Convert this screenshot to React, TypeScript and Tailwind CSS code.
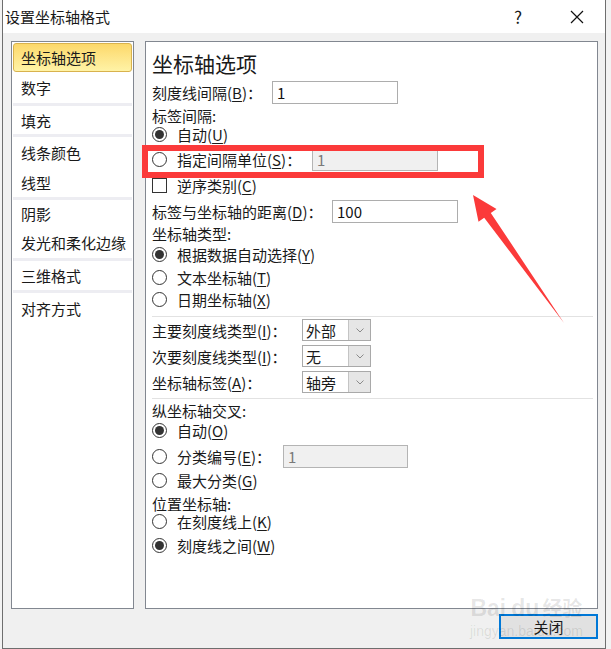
import React from 'react';

const Mn = ({ k }: { k: string }) => (
  <>
    (<span className="underline underline-offset-2">{k}</span>)
  </>
);

const Radio = ({ checked }: { checked?: boolean }) => (
  <span className="w-[15px] h-[15px] rounded-full border border-[#333] bg-white flex items-center justify-center shrink-0">
    {checked && <span className="w-[9px] h-[9px] rounded-full bg-[#333]" />}
  </span>
);

const Input = ({ value, disabled, w }: { value: string; disabled?: boolean; w: string }) => (
  <div
    className={`${w} h-[23px] border flex items-center pl-[4px] ${
      disabled ? 'bg-[#f0f0f0] border-[#b4b4b4] text-[#7a7a7a]' : 'bg-white border-[#adadad] text-[#111]'
    }`}
  >
    {value}
  </div>
);

const Select = ({ value }: { value: string }) => (
  <div className="w-[69px] h-[22px] border border-[#a9a9a9] bg-white flex">
    <div className="flex-1 flex items-center pl-[3px]">{value}</div>
    <div className="w-[22px] bg-[#e6e6e6] border-l border-[#c4c4c4] flex items-center justify-center">
      <svg width="8" height="5" viewBox="0 0 8 5">
        <path d="M0.5 0.5 L4 4 L7.5 0.5" stroke="#8a8a8a" fill="none" strokeWidth="1" />
      </svg>
    </div>
  </div>
);

const Item = ({ label, h }: { label: string; h: string }) => (
  <div className={`${h} flex items-center pl-[9px]`}>{label}</div>
);

const Sep = () => <div className="h-[3px] mx-[1px] bg-[#ededf2]" />;

export default function App() {
  return (
    <div className="relative w-[611px] h-[649px] flex bg-[#ececec] text-[15px] text-[#1a1a1a] font-['Noto_Sans_CJK_SC','Microsoft_YaHei',sans-serif] leading-none overflow-hidden">
      <div className="w-[2px] bg-[#f2f2f2]" />

      {/* Dialog */}
      <div className="w-[604px] h-[649px] border-l border-r border-b border-[#6e6e6e] flex flex-col">
        {/* Title bar */}
        <div className="h-[33px] bg-white flex items-center pl-[2px] shrink-0">
          <span className="flex-1">设置坐标轴格式</span>
          <span className="w-[20px] text-center text-[17px] mr-[42px]">?</span>
          <svg width="14" height="14" viewBox="0 0 14 14" className="mr-[21px]">
            <path d="M1 1 L13 13 M13 1 L1 13" stroke="#111" strokeWidth="1.2" />
          </svg>
        </div>

        {/* Body */}
        <div className="flex-1 bg-[#f0f0f0] flex flex-col pt-[8px]">
          <div className="flex pl-[8px]">
            {/* Category list */}
            <div className="w-[123px] h-[568px] bg-white border border-[#828790] flex flex-col pt-[1px]">
              <div className="h-[29px] mx-[1px] rounded-[3px] border border-[#d8b24e] bg-gradient-to-b from-[#fcd869] to-[#fff3a6] flex items-center pl-[7px]">
                坐标轴选项
              </div>
              <Item label="数字" h="h-[31px]" />
              <Sep />
              <Item label="填充" h="h-[28px]" />
              <Sep />
              <Item label="线条颜色" h="h-[30px]" />
              <Item label="线型" h="h-[30px]" />
              <Sep />
              <Item label="阴影" h="h-[27px]" />
              <Item label="发光和柔化边缘" h="h-[31px]" />
              <Sep />
              <Item label="三维格式" h="h-[29px]" />
              <Sep />
              <Item label="对齐方式" h="h-[30px]" />
            </div>

            {/* Options panel */}
            <div className="ml-[11px] w-[453px] h-[568px] bg-white border border-[#828790] pl-[6px] flex flex-col">
              <div className="mt-[7px] h-[28px] flex items-center text-[21px]">坐标轴选项</div>
              <div className="h-[30px] flex items-center">
                <span className="w-[120px]">
                  刻度线间隔<Mn k="B" />：
                </span>
                <Input value="1" w="w-[126px]" />
              </div>
              <div className="h-[16px] flex items-center">标签间隔:</div>
              <div className="h-[22px] flex items-center gap-[10px]">
                <Radio checked />
                <span>
                  自动<Mn k="U" />
                </span>
              </div>
              <div className="h-[28px] flex items-center">
                <Radio />
                <span className="ml-[10px] w-[135px]">
                  指定间隔单位<Mn k="S" />：
                </span>
                <Input value="1" disabled w="w-[126px]" />
              </div>
              <div className="h-[24px] flex items-center gap-[10px]">
                <span className="w-[15px] h-[15px] border border-[#333] bg-white shrink-0" />
                <span>
                  逆序类别<Mn k="C" />
                </span>
              </div>
              <div className="h-[28px] flex items-center">
                <span className="w-[180px]">
                  标签与坐标轴的距离<Mn k="D" />：
                </span>
                <Input value="100" w="w-[126px]" />
              </div>
              <div className="h-[16px] flex items-center">坐标轴类型:</div>
              <div className="h-[26px] flex items-center gap-[10px]">
                <Radio checked />
                <span>
                  根据数据自动选择<Mn k="Y" />
                </span>
              </div>
              <div className="h-[20px] flex items-center gap-[10px]">
                <Radio />
                <span>
                  文本坐标轴<Mn k="T" />
                </span>
              </div>
              <div className="h-[24px] flex items-center gap-[10px]">
                <Radio />
                <span>
                  日期坐标轴<Mn k="X" />
                </span>
              </div>
              <div className="h-[10px] flex items-center pr-[4px]">
                <div className="w-full h-[1px] bg-[#e2e2e2]" />
              </div>
              <div className="h-[18px] flex items-center">
                <span className="w-[150px]">
                  主要刻度线类型<Mn k="I" />：
                </span>
                <Select value="外部" />
              </div>
              <div className="h-[34px] flex items-center">
                <span className="w-[150px]">
                  次要刻度线类型<Mn k="I" />：
                </span>
                <Select value="无" />
              </div>
              <div className="h-[18px] flex items-center">
                <span className="w-[150px]">
                  坐标轴标签<Mn k="A" />：
                </span>
                <Select value="轴旁" />
              </div>
              <div className="h-[14px] flex items-center pr-[4px]">
                <div className="w-full h-[1px] bg-[#e2e2e2]" />
              </div>
              <div className="h-[10px] flex items-center">纵坐标轴交叉:</div>
              <div className="h-[30px] flex items-center gap-[10px]">
                <Radio checked />
                <span>
                  自动<Mn k="O" />
                </span>
              </div>
              <div className="h-[22px] flex items-center">
                <Radio />
                <span className="ml-[10px] w-[106px]">
                  分类编号<Mn k="E" />：
                </span>
                <Input value="1" disabled w="w-[125px]" />
              </div>
              <div className="h-[26px] flex items-center gap-[10px]">
                <Radio />
                <span>
                  最大分类<Mn k="G" />
                </span>
              </div>
              <div className="h-[20px] flex items-center">位置坐标轴:</div>
              <div className="h-[16px] flex items-center gap-[10px]">
                <Radio />
                <span>
                  在刻度线上<Mn k="K" />
                </span>
              </div>
              <div className="h-[32px] flex items-center gap-[10px]">
                <Radio checked />
                <span>
                  刻度线之间<Mn k="W" />
                </span>
              </div>
            </div>
          </div>

          {/* Button row */}
          <div className="mt-[5px] flex justify-end pr-[7px]">
            <button className="w-[99px] h-[25px] border-2 border-[#0078d7] bg-[#e1e1e1] flex items-center justify-center">
              关闭
            </button>
          </div>
        </div>
      </div>

      <div className="w-[5px] bg-[#f2f2f2]" />

      {/* Annotation: red highlight box */}
      <div className="absolute left-[142px] top-[145px] w-[342px] h-[33px] border-[6px] border-[#fb3a3a]" />

      {/* Annotation: red arrow */}
      <svg className="absolute left-0 top-0" width="611" height="649" viewBox="0 0 611 649">
        <polygon
          points="473,195 496.5,209 490.8,213 564,323 484.2,217.7 478.5,221.8"
          fill="#fb3a3a"
        />
      </svg>

      {/* Watermark */}
      <div className="absolute left-[470px] top-[597px] flex flex-col items-center whitespace-nowrap text-[#000]/10 font-['Liberation_Sans',sans-serif]">
        <span className="text-[23px] font-bold leading-none">
          Bai<span className="ml-[5px]">du</span>
          <span className="ml-[3px] font-['Noto_Sans_CJK_SC',sans-serif] text-[20px]">经验</span>
        </span>
        <span className="text-[14px] leading-none mt-[4px]">jingyan.baidu.com</span>
      </div>
    </div>
  );
}
